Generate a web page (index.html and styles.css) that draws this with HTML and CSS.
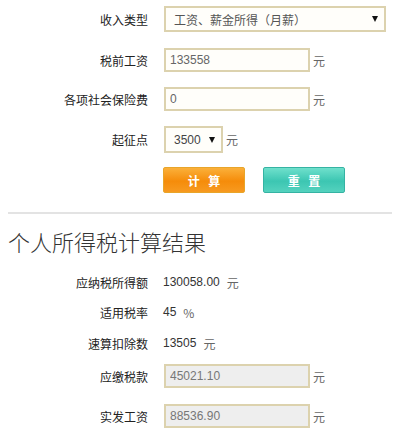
FILE: index.html
```html
<!DOCTYPE html>
<html lang="zh">
<head>
<meta charset="utf-8">
<title>个人所得税计算器</title>
<link rel="stylesheet" href="styles.css">
</head>
<body>
<div class="page">
  <form class="calc">
    <div class="row row-type">
      <label class="label">收入类型</label>
      <div class="select-wrap wide">
        <select class="select"><option>工资、薪金所得（月薪）</option></select>
      </div>
    </div>
    <div class="row row-input">
      <label class="label">税前工资</label>
      <input class="input" type="text" value="133558">
      <span class="unit">元</span>
    </div>
    <div class="row row-input">
      <label class="label">各项社会保险费</label>
      <input class="input" type="text" value="0">
      <span class="unit">元</span>
    </div>
    <div class="row row-threshold">
      <label class="label">起征点</label>
      <div class="select-wrap narrow">
        <select class="select"><option>3500</option></select>
      </div>
      <span class="unit">元</span>
    </div>
    <div class="row row-buttons">
      <span class="label"></span>
      <button type="button" class="btn btn-calc">计 算</button>
      <button type="button" class="btn btn-reset">重 置</button>
    </div>
  </form>
  <hr class="divider">
  <h2 class="title">个人所得税计算结果</h2>
  <div class="results">
    <div class="row row-text">
      <span class="label">应纳税所得额</span>
      <span class="value">130058.00</span><span class="unit-text">元</span>
    </div>
    <div class="row row-text">
      <span class="label">适用税率</span>
      <span class="value">45</span><span class="unit-text">%</span>
    </div>
    <div class="row row-text row-text-last">
      <span class="label">速算扣除数</span>
      <span class="value">13505</span><span class="unit-text">元</span>
    </div>
    <div class="row row-input row-out">
      <span class="label">应缴税款</span>
      <input class="input readonly" type="text" value="45021.10" readonly>
      <span class="unit">元</span>
    </div>
    <div class="row row-input row-out2">
      <span class="label">实发工资</span>
      <input class="input readonly" type="text" value="88536.90" readonly>
      <span class="unit">元</span>
    </div>
  </div>
</div>
</body>
</html>
```
FILE: styles.css
```css
* { box-sizing: border-box; }
html, body { margin: 0; padding: 0; background: #ffffff; }
body {
  font-family: "Liberation Sans", "Noto Sans CJK SC", sans-serif;
  font-size: 12px;
  color: #333333;
}
.page { padding: 6px 8px 0 8px; }
.calc { margin: 0; }
.row {
  display: flex;
  align-items: center;
}
.label {
  width: 140px;
  flex: 0 0 140px;
  text-align: right;
  margin-right: 16px;
  font-family: "Noto Sans CJK SC", sans-serif;
  font-size: 12px;
  color: #222222;
}
.row-type { height: 26px; }
.row-input { height: 24px; margin-top: 16px; }
.row-input + .row-input { margin-top: 15px; }
.row-threshold { height: 27px; margin-top: 15px; }
.row-buttons { height: 26px; margin-top: 14px; }

.select-wrap {
  position: relative;
  height: 100%;
  border: 2px solid #dcd2ae;
  background: #fffefa;
}
.select-wrap.wide { width: 222px; }
.select-wrap.narrow { width: 59px; }
.select-wrap::after {
  content: "";
  position: absolute;
  right: 6px;
  top: 50%;
  margin-top: -3px;
  border-left: 3.5px solid transparent;
  border-right: 3.5px solid transparent;
  border-top: 6px solid #111111;
  pointer-events: none;
}
.select {
  appearance: none;
  -webkit-appearance: none;
  border: 0;
  background: transparent;
  width: 100%;
  height: 100%;
  padding: 0 0 0 8px;
  font-family: "Noto Sans CJK SC", sans-serif;
  font-size: 12px;
  color: #555555;
  outline: none;
}
.narrow .select { font-family: "Liberation Sans", sans-serif; padding-left: 8px; color: #444; }
.input {
  width: 146px;
  height: 24px;
  border: 2px solid #dcd2ae;
  background: #fffefa;
  padding: 0 4px;
  font-family: "Liberation Sans", sans-serif;
  font-size: 12px;
  color: #666666;
  outline: none;
}
.input.readonly { background: #eeeeee; color: #777777; }
.unit {
  margin-left: 3px;
  font-family: "Noto Sans CJK SC", sans-serif;
  font-size: 12px;
  color: #666666;
}
.btn {
  width: 82px;
  height: 26px;
  border-radius: 2px;
  color: #ffffff;
  font-family: "Noto Sans CJK SC", sans-serif;
  font-weight: bold;
  font-size: 12px;
  letter-spacing: 3px;
  padding: 0 0 0 3px;
  cursor: pointer;
}
.btn-calc {
  margin-left: -1px;
  border: 1px solid #e8a52a;
  background: linear-gradient(#fbb03a, #f58c0a 55%, #f79a20);
}
.btn-reset {
  margin-left: 18px;
  border: 1px solid #35b3a3;
  background: linear-gradient(#6fe0cc, #3cc6b2 55%, #54d2be);
}
.divider {
  margin: 19px 12px 0 0;
  border: 0;
  height: 2px;
  background: #e3e3e3;
}
.title {
  margin: 12px 0 0 0;
  line-height: 30px;
  font-family: "Noto Sans CJK SC", sans-serif;
  font-weight: 300;
  font-size: 22px;
  color: #333333;
}
.results { margin: 0; }
.row-text { height: 20px; margin-top: 10px; }
.results .row-text:first-child { margin-top: 16px; }
.row-text-last { margin-top: 11px; }
.value {
  margin-left: -1px;
  font-family: "Liberation Sans", sans-serif;
  font-size: 12px;
  color: #333333;
}
.unit-text {
  margin-left: 7px;
  font-family: "Noto Sans CJK SC", sans-serif;
  font-size: 12px;
  color: #666666;
}
.results .row-out { margin-top: 11px; }
.results .row-out2 { margin-top: 16px; }
```
